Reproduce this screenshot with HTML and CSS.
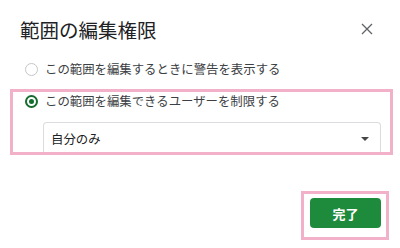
FILE: index.html
```html
<!DOCTYPE html>
<html lang="ja">
<head>
<meta charset="utf-8">
<link rel="stylesheet" href="styles.css">
</head>
<body>
<div class="dialog">
  <div class="header">
    <h1 class="title">範囲の編集権限</h1>
    <svg class="close" width="12" height="12" viewBox="0 0 12 12"><path d="M1 1L11 11M11 1L1 11" stroke="#5f6368" stroke-width="1.3" fill="none"/></svg>
  </div>
  <div class="options">
    <div class="option">
      <span class="radio"></span>
      <span class="label">この範囲を編集するときに警告を表示する</span>
    </div>
    <div class="option">
      <span class="radio checked"></span>
      <span class="label">この範囲を編集できるユーザーを制限する</span>
    </div>
    <div class="select">
      <span class="select-text">自分のみ</span>
      <span class="caret"></span>
    </div>
  </div>
  <div class="footer">
    <button class="done">完了</button>
  </div>
</div>
<div class="hl hl-restrict"></div>
<div class="hl hl-done"></div>
</body>
</html>
```
FILE: styles.css
```css
html, body {
  margin: 0;
  padding: 0;
  background: #fff;
}
body {
  width: 400px;
  height: 248px;
  overflow: hidden;
  position: relative;
  font-family: "Noto Sans CJK JP", "Noto Sans", sans-serif;
  color: #202124;
}
.dialog {
  padding: 17px 27px 0 20px;
}
.header {
  display: flex;
  align-items: center;
  justify-content: space-between;
  height: 26px;
}
.title {
  margin: 0;
  font-size: 19.5px;
  font-weight: 400;
  line-height: 26px;
  color: #202124;
  letter-spacing: 0;
}
.close {
  display: block;
  margin-top: -2px;
}
.options {
  padding-top: 10px;
  padding-left: 5px;
}
.option {
  display: flex;
  align-items: center;
  height: 32px;
}
.radio {
  box-sizing: border-box;
  width: 13px;
  height: 13px;
  border-radius: 50%;
  border: 1px solid #c4c7c5;
  margin-right: 7px;
  flex: none;
  position: relative;
}
.radio.checked {
  border: 2px solid #146c2e;
}
.radio.checked::after {
  content: "";
  position: absolute;
  left: 2px;
  top: 2px;
  width: 5px;
  height: 5px;
  border-radius: 50%;
  background: #146c2e;
}
.label {
  font-size: 12.4px;
  line-height: 16px;
  color: #3c4043;
}
.select {
  box-sizing: border-box;
  margin-top: 5px;
  margin-left: 18px;
  margin-right: -8px;
  height: 33px;
  border: 1px solid #dadce0;
  border-bottom: none;
  border-radius: 4px 4px 0 0;
  display: flex;
  align-items: flex-start;
  justify-content: space-between;
  padding: 8px 11px 0 7px;
}
.select-text {
  font-size: 12.4px;
  line-height: 16px;
  color: #202124;
}
.caret {
  width: 0;
  height: 0;
  border-left: 4px solid transparent;
  border-right: 4px solid transparent;
  border-top: 4px solid #444746;
  margin-top: 6px;
}
.footer {
  display: flex;
  justify-content: flex-end;
  margin-top: 43px;
  margin-right: -8px;
}
.done {
  width: 71px;
  height: 30px;
  border: none;
  border-radius: 4px;
  background: #1e8a3c;
  color: #fff;
  font-family: "Noto Sans CJK JP", sans-serif;
  font-size: 13px;
  font-weight: 700;
  padding: 0;
}
.hl {
  position: absolute;
  box-sizing: border-box;
  border: 3px solid #f3b0c9;
  pointer-events: none;
}
.hl-restrict {
  left: 10px;
  top: 89px;
  width: 383px;
  height: 66px;
}
.hl-done {
  left: 301px;
  top: 191px;
  width: 88px;
  height: 49px;
}
```
